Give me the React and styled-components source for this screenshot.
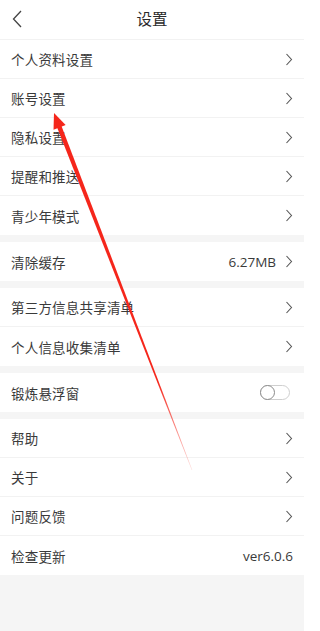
import React from "react";
import styled, { createGlobalStyle } from "styled-components";

const Global = createGlobalStyle`
  html, body { margin: 0; padding: 0; background: #fff; }
  body { font-family: "Noto Sans CJK SC", "Noto Sans", sans-serif; }
`;

const Screen = styled.div`
  position: relative;
  width: 304px;
  height: 631px;
  background: #f5f5f5;
  display: flex;
  flex-direction: column;
`;

const Header = styled.div`
  height: 40px;
  box-sizing: border-box;
  background: #fff;
  border-bottom: 1px solid #f2f2f2;
  display: flex;
  align-items: center;
  justify-content: center;
  position: relative;
`;

const Back = styled.svg`
  position: absolute;
  left: 12px;
  top: 10px;
`;

const Title = styled.div`
  font-size: 15.5px;
  color: #2a2a2a;
  line-height: 1;
  margin-top: -1px;
`;

const Group = styled.div`
  background: #fff;
  margin-bottom: ${p => (p.$last ? "0" : "7px")};
`;

const Row = styled.div`
  height: 39px;
  box-sizing: border-box;
  padding: 0 11px;
  display: flex;
  align-items: center;
  border-bottom: ${p => (p.$last ? "none" : "1px solid #f2f2f2")};
`;

const Label = styled.div`
  flex: 1;
  font-size: 13.5px;
  color: #3a3a3a;
  letter-spacing: 0.2px;
`;

const Value = styled.div`
  font-size: 13.5px;
  color: #3a3a3a;
  font-family: "Open Sans", "Noto Sans", sans-serif;
  margin-right: ${p => (p.$chev ? "9px" : "0")};
`;

const Toggle = styled.div`
  width: 30px;
  height: 15px;
  box-sizing: border-box;
  border: 1px solid #cfcfcf;
  border-radius: 8px;
  position: relative;
  margin-right: 3px;
`;

const Knob = styled.div`
  position: absolute;
  left: -1px;
  top: -1px;
  width: 15px;
  height: 15px;
  box-sizing: border-box;
  border-radius: 50%;
  border: 1px solid #8a8a8a;
  background: #fff;
`;

const ArrowSvg = styled.svg`
  position: absolute;
  left: 0;
  top: 0;
  pointer-events: none;
`;

const ChevronSvg = styled.svg`
  flex: none;
`;

const Chevron = () => (
  <ChevronSvg width="8" height="13" viewBox="0 0 8 13">
    <path d="M1.5 1 L6.5 6.5 L1.5 12" fill="none" stroke="#555" strokeWidth="1.1" />
  </ChevronSvg>
);

const groups = [
  [
    { label: "个人资料设置", chev: true },
    { label: "账号设置", chev: true },
    { label: "隐私设置", chev: true },
    { label: "提醒和推送", chev: true },
    { label: "青少年模式", chev: true },
  ],
  [{ label: "清除缓存", value: "6.27MB", chev: true }],
  [
    { label: "第三方信息共享清单", chev: true },
    { label: "个人信息收集清单", chev: true },
  ],
  [{ label: "锻炼悬浮窗", toggle: true }],
  [
    { label: "帮助", chev: true },
    { label: "关于", chev: true },
    { label: "问题反馈", chev: true },
    { label: "检查更新", value: "ver6.0.6" },
  ],
];

export default function App() {
  const tip = [54, 113];
  const tail = [192, 470];
  const dx = tail[0] - tip[0];
  const dy = tail[1] - tip[1];
  const len = Math.hypot(dx, dy);
  const ux = dx / len, uy = dy / len;
  const px = uy, py = -ux;
  const hb = [tip[0] + ux * 14, tip[1] + uy * 14];
  const wing = 6.5;
  const shaftW = 2.3;
  const shaft = [
    [hb[0] + px * shaftW - ux * 1, hb[1] + py * shaftW - uy * 1],
    [tail[0] + px * 0.3, tail[1] + py * 0.3],
    [tail[0] - px * 0.3, tail[1] - py * 0.3],
    [hb[0] - px * shaftW - ux * 1, hb[1] - py * shaftW - uy * 1],
  ];
  const head = [
    tip,
    [hb[0] + px * wing + ux * 1.5, hb[1] + py * wing + uy * 1.5],
    [hb[0] - px * wing + ux * 1.5, hb[1] - py * wing + uy * 1.5],
  ];
  const pts = a => a.map(p => p.join(",")).join(" ");

  return (
    <>
      <Global />
      <Screen>
        <Header>
          <Back width="12" height="18" viewBox="0 0 12 18">
            <path d="M9 1 L1.5 9 L9 17" fill="none" stroke="#444" strokeWidth="1.3" />
          </Back>
          <Title>设置</Title>
        </Header>
        {groups.map((g, gi) => (
          <Group key={gi} $last={gi === groups.length - 1}>
            {g.map((r, ri) => (
              <Row key={ri} $last={ri === g.length - 1}>
                <Label>{r.label}</Label>
                {r.value && <Value $chev={r.chev}>{r.value}</Value>}
                {r.toggle && (
                  <Toggle>
                    <Knob />
                  </Toggle>
                )}
                {r.chev && <Chevron />}
              </Row>
            ))}
          </Group>
        ))}
        <ArrowSvg width="304" height="631" viewBox="0 0 304 631">
          <defs>
            <linearGradient id="fade" gradientUnits="userSpaceOnUse" x1={tip[0]} y1={tip[1]} x2={tail[0]} y2={tail[1]}>
              <stop offset="0" stopColor="#f5261b" />
              <stop offset="0.75" stopColor="#f5261b" />
              <stop offset="1" stopColor="#f5261b" stopOpacity="0.15" />
            </linearGradient>
          </defs>
          <polygon points={pts(shaft)} fill="url(#fade)" />
          <polygon points={pts(head)} fill="#f5261b" />
        </ArrowSvg>
      </Screen>
    </>
  );
}
